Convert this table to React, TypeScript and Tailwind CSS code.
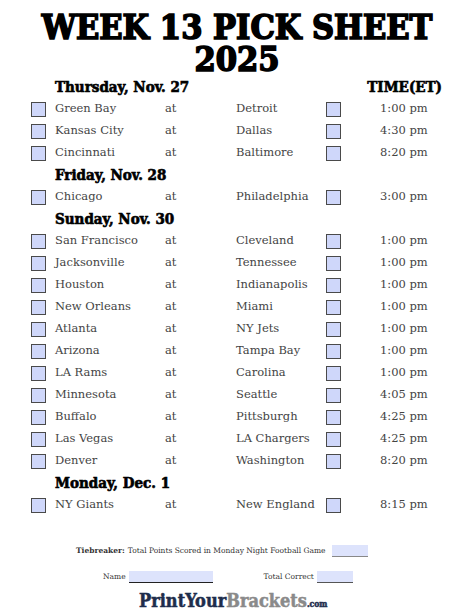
const GAMES: { day: string; games: [string, string, string][] }[] = [
  {
    day: "Thursday, Nov. 27",
    games: [
      ["Green Bay", "Detroit", "1:00 pm"],
      ["Kansas City", "Dallas", "4:30 pm"],
      ["Cincinnati", "Baltimore", "8:20 pm"],
    ],
  },
  { day: "Friday, Nov. 28", games: [["Chicago", "Philadelphia", "3:00 pm"]] },
  {
    day: "Sunday, Nov. 30",
    games: [
      ["San Francisco", "Cleveland", "1:00 pm"],
      ["Jacksonville", "Tennessee", "1:00 pm"],
      ["Houston", "Indianapolis", "1:00 pm"],
      ["New Orleans", "Miami", "1:00 pm"],
      ["Atlanta", "NY Jets", "1:00 pm"],
      ["Arizona", "Tampa Bay", "1:00 pm"],
      ["LA Rams", "Carolina", "1:00 pm"],
      ["Minnesota", "Seattle", "4:05 pm"],
      ["Buffalo", "Pittsburgh", "4:25 pm"],
      ["Las Vegas", "LA Chargers", "4:25 pm"],
      ["Denver", "Washington", "8:20 pm"],
    ],
  },
  { day: "Monday, Dec. 1", games: [["NY Giants", "New England", "8:15 pm"]] },
];

const slab = "font-['DejaVu_Serif',serif] font-bold [font-stretch:condensed]";

function Box() {
  return <span className="block h-[15px] w-[15px] shrink-0 border-[1.5px] border-[#4a4a4a] bg-[#cfd7fa]" />;
}

export default function App() {
  return (
    <div className="h-[613px] w-[474px] overflow-hidden bg-white font-['DejaVu_Serif',serif] text-[#444]">
      {/* title */}
      <div className={`pt-[11px] text-center text-[34px] leading-[32px] text-black ${slab} [-webkit-text-stroke:1.6px_black]`}>
        <div>WEEK 13 PICK SHEET</div>
        <div>2025</div>
      </div>

      {/* games */}
      <div className="mt-[1px] pl-[31px]">
        {GAMES.map((d, i) => (
          <div key={d.day}>
            <div className="flex h-[22px] items-center text-black">
              <span className={`ml-[24px] text-[15px] ${slab} [-webkit-text-stroke:0.6px_black]`}>{d.day}</span>
              {i === 0 && (
                <span className={`ml-auto mr-[32px] text-[15px] ${slab} [-webkit-text-stroke:0.6px_black]`}>
                  TIME(ET)
                </span>
              )}
            </div>
            {d.games.map(([away, home, time]) => (
              <div key={away} className="flex h-[22px] items-center text-[11.5px]">
                <Box />
                <span className="ml-[9px] w-[110px]">{away}</span>
                <span className="w-[71px]">at</span>
                <span className="w-[90px]">{home}</span>
                <Box />
                <span className="ml-[39px]">{time}</span>
              </div>
            ))}
          </div>
        ))}
      </div>

      {/* tiebreaker + name */}
      <div className="mt-[29px] flex items-center pl-[76px] text-[7.5px] text-[#333]">
        <span className="font-bold">Tiebreaker:</span>
        <span className="ml-[3px]">Total Points Scored in Monday Night Football Game</span>
        <span className="ml-[6px] h-[12px] w-[36px] border-b border-[#888] bg-[#dde3fc]" />
      </div>

      <div className="mt-[14px] flex items-center text-[7.5px] text-[#333]">
        <span className="ml-[103px]">Name</span>
        <span className="ml-[3px] h-[12px] w-[84px] border-b border-[#222] bg-[#dde3fc]" />
        <span className="ml-[51px]">Total Correct</span>
        <span className="ml-[3px] h-[12px] w-[36px] border-b border-[#555] bg-[#dde3fc]" />
      </div>

      {/* logo */}
      <div className={`mt-[8px] flex items-baseline pl-[139px] text-[18px] leading-[20px] ${slab} [-webkit-text-stroke:0.5px_currentColor]`}>
        <span className="text-[#1e2d4c]">PrintYour</span>
        <span className="text-[#8a8a8a]">Brackets</span>
        <span className="text-[8.5px] text-[#1e2d4c]">.com</span>
      </div>
    </div>
  );
}
